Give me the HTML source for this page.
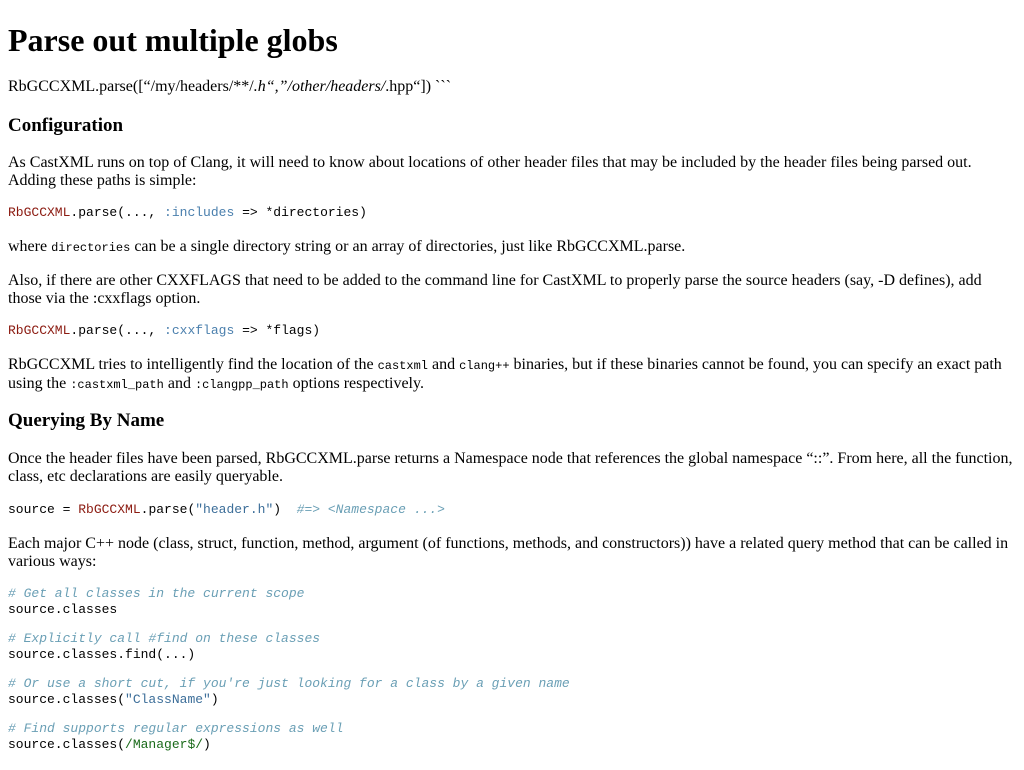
<!DOCTYPE html>
<html><head><meta charset="utf-8"><style>
body{margin:0;background:#fff;color:#000;font-family:"Liberation Serif",serif;font-size:16px;}
.a{position:absolute;left:8px;white-space:nowrap;line-height:18px;}
h1{margin:0;font-size:32px;line-height:36px;font-weight:bold;}
h3{margin:0;font-size:19px;line-height:22px;font-weight:bold;}
.m{font-family:"Liberation Mono",monospace;font-size:13px;line-height:16px;white-space:pre;}
code{font-family:"Liberation Mono",monospace;font-size:12px;}
.c{font-style:italic;color:#6a9fb5;}
.k{color:#8b1a10;}
.s{color:#3c6e99;}
.sy{color:#4a7fad;}
.r{color:#1a6a1a;}
</style></head><body>
<div class="a" style="top:22px"><h1>Parse out multiple globs</h1></div>
<div class="a" style="top:78px">RbGCCXML.parse([“/my/headers/**/<i>.h“,”/other/headers/</i>.hpp“]) &#96;&#96;&#96;</div>
<div class="a" style="top:115px"><h3>Configuration</h3></div>
<div class="a" style="top:154px">As CastXML runs on top of Clang, it will need to know about locations of other header files that may be included by the header files being parsed out.<br>Adding these paths is simple:</div>
<div class="a m" style="top:205px"><span class="k">RbGCCXML</span>.parse(..., <span class="sy">:includes</span> =&gt; *directories)</div>
<div class="a" style="top:238px">where <code>directories</code> can be a single directory string or an array of directories, just like RbGCCXML.parse.</div>
<div class="a" style="top:272px">Also, if there are other CXXFLAGS that need to be added to the command line for CastXML to properly parse the source headers (say, -D defines), add<br>those via the :cxxflags option.</div>
<div class="a m" style="top:323px"><span class="k">RbGCCXML</span>.parse(..., <span class="sy">:cxxflags</span> =&gt; *flags)</div>
<div class="a" style="top:356px">RbGCCXML tries to intelligently find the location of the <code>castxml</code> and <code>clang++</code> binaries, but if these binaries cannot be found, you can specify an exact path<br>using the <code>:castxml_path</code> and <code>:clangpp_path</code> options respectively.</div>
<div class="a" style="top:410px"><h3>Querying By Name</h3></div>
<div class="a" style="top:450px">Once the header files have been parsed, RbGCCXML.parse returns a Namespace node that references the global namespace “::”. From here, all the function,<br>class, etc declarations are easily queryable.</div>
<div class="a m" style="top:502px">source = <span class="k">RbGCCXML</span>.parse(<span class="s">"header.h"</span>)  <span class="c">#=&gt; &lt;Namespace ...&gt;</span></div>
<div class="a" style="top:535px">Each major C++ node (class, struct, function, method, argument (of functions, methods, and constructors)) have a related query method that can be called in<br>various ways:</div>
<div class="a m" style="top:586px"><span class="c"># Get all classes in the current scope</span>
source.classes</div>
<div class="a m" style="top:631px"><span class="c"># Explicitly call #find on these classes</span>
source.classes.find(...)</div>
<div class="a m" style="top:676px"><span class="c"># Or use a short cut, if you're just looking for a class by a given name</span>
source.classes(<span class="s">"ClassName"</span>)</div>
<div class="a m" style="top:721px"><span class="c"># Find supports regular expressions as well</span>
source.classes(<span class="r">/Manager$/</span>)</div>
</body></html>
